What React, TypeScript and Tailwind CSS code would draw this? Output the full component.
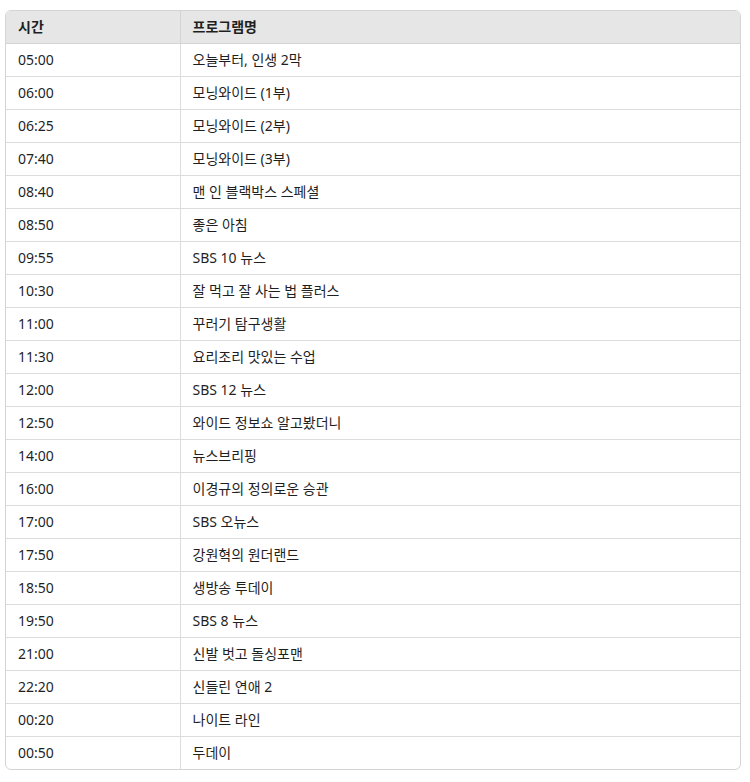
const rows: [string, string][] = [
  ['05:00', '오늘부터, 인생 2막'],
  ['06:00', '모닝와이드 (1부)'],
  ['06:25', '모닝와이드 (2부)'],
  ['07:40', '모닝와이드 (3부)'],
  ['08:40', '맨 인 블랙박스 스페셜'],
  ['08:50', '좋은 아침'],
  ['09:55', 'SBS 10 뉴스'],
  ['10:30', '잘 먹고 잘 사는 법 플러스'],
  ['11:00', '꾸러기 탐구생활'],
  ['11:30', '요리조리 맛있는 수업'],
  ['12:00', 'SBS 12 뉴스'],
  ['12:50', '와이드 정보쇼 알고봤더니'],
  ['14:00', '뉴스브리핑'],
  ['16:00', '이경규의 정의로운 승관'],
  ['17:00', 'SBS 오뉴스'],
  ['17:50', '강원혁의 원더랜드'],
  ['18:50', '생방송 투데이'],
  ['19:50', 'SBS 8 뉴스'],
  ['21:00', '신발 벗고 돌싱포맨'],
  ['22:20', '신들린 연애 2'],
  ['00:20', '나이트 라인'],
  ['00:50', '두데이'],
]

export default function App() {
  return (
    <div className="min-h-screen bg-white pt-[10px] pl-[5px] pr-[9px] font-['Noto_Sans','Noto_Sans_CJK_KR',sans-serif] text-[14px] text-[#1f1f1f]">
      <div className="overflow-hidden rounded-md border border-[#d4d4d4]">
        <table className="w-full border-collapse">
          <thead>
            <tr className="h-[32px] border-b border-[#d4d4d4] bg-[#e6e6e6]">
              <th className="w-[174px] border-r border-[#d4d4d4] pl-3 text-left font-bold">시간</th>
              <th className="pl-3 text-left font-bold">프로그램명</th>
            </tr>
          </thead>
          <tbody>
            {rows.map(([time, name], i) => (
              <tr
                key={i}
                className={`h-[33px] ${i < rows.length - 1 ? 'border-b border-[#dcdcdc]' : ''}`}
              >
                <td className="border-r border-[#dcdcdc] pl-3">{time}</td>
                <td className="pl-3">{name}</td>
              </tr>
            ))}
          </tbody>
        </table>
      </div>
    </div>
  )
}
